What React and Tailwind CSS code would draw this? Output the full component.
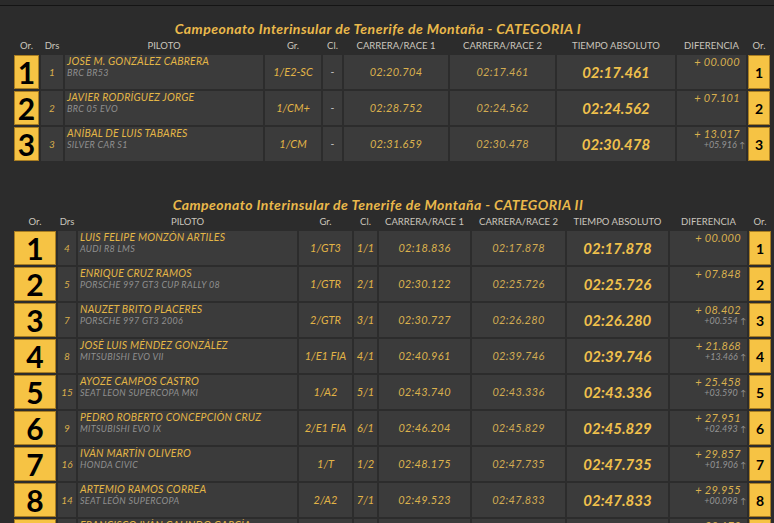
import React from 'react';

const C1 = ['w-[25px]', 'w-[22px]', 'w-[198px]', 'w-[56px]', 'w-[19px]', 'w-[104px]', 'w-[105px]', 'w-[118px]', 'w-[69px]', 'w-[22px]'];
const C2 = ['w-[42px]', 'w-[18px]', 'w-[219px]', 'w-[53px]', 'w-[23px]', 'w-[91px]', 'w-[93px]', 'w-[101px]', 'w-[77px]', 'w-[22px]'];

const cabeceras = ['Or.', 'Drs', 'PILOTO', 'Gr.', 'Cl.', 'CARRERA/RACE 1', 'CARRERA/RACE 2', 'TIEMPO ABSOLUTO', 'DIFERENCIA', 'Or.'];

const cat1 = [
  { pos: 1, drs: '1', piloto: 'JOSÉ M. GONZÁLEZ CABRERA', coche: 'BRC BR53', gr: '1/E2-SC', cl: '-', r1: '02:20.704', r2: '02:17.461', t: '02:17.461', dif: '+ 00.000' },
  { pos: 2, drs: '2', piloto: 'JAVIER RODRÍGUEZ JORGE', coche: 'BRC 05 EVO', gr: '1/CM+', cl: '-', r1: '02:28.752', r2: '02:24.562', t: '02:24.562', dif: '+ 07.101' },
  { pos: 3, drs: '3', piloto: 'ANÍBAL DE LUIS TABARES', coche: 'SILVER CAR S1', gr: '1/CM', cl: '-', r1: '02:31.659', r2: '02:30.478', t: '02:30.478', dif: '+ 13.017', sub: '+05.916' },
];

const cat2 = [
  { pos: 1, drs: '4', piloto: 'LUIS FELIPE MONZÓN ARTILES', coche: 'AUDI R8 LMS', gr: '1/GT3', cl: '1/1', r1: '02:18.836', r2: '02:17.878', t: '02:17.878', dif: '+ 00.000' },
  { pos: 2, drs: '5', piloto: 'ENRIQUE CRUZ RAMOS', coche: 'PORSCHE 997 GT3 CUP RALLY 08', gr: '1/GTR', cl: '2/1', r1: '02:30.122', r2: '02:25.726', t: '02:25.726', dif: '+ 07.848' },
  { pos: 3, drs: '7', piloto: 'NAUZET BRITO PLACERES', coche: 'PORSCHE 997 GT3 2006', gr: '2/GTR', cl: '3/1', r1: '02:30.727', r2: '02:26.280', t: '02:26.280', dif: '+ 08.402', sub: '+00.554' },
  { pos: 4, drs: '8', piloto: 'JOSÉ LUIS MÉNDEZ GONZÁLEZ', coche: 'MITSUBISHI EVO VII', gr: '1/E1 FIA', cl: '4/1', r1: '02:40.961', r2: '02:39.746', t: '02:39.746', dif: '+ 21.868', sub: '+13.466' },
  { pos: 5, drs: '15', piloto: 'AYOZE CAMPOS CASTRO', coche: 'SEAT LEON SUPERCOPA MKI', gr: '1/A2', cl: '5/1', r1: '02:43.740', r2: '02:43.336', t: '02:43.336', dif: '+ 25.458', sub: '+03.590' },
  { pos: 6, drs: '9', piloto: 'PEDRO ROBERTO CONCEPCIÓN CRUZ', coche: 'MITSUBISHI EVO IX', gr: '2/E1 FIA', cl: '6/1', r1: '02:46.204', r2: '02:45.829', t: '02:45.829', dif: '+ 27.951', sub: '+02.493' },
  { pos: 7, drs: '16', piloto: 'IVÁN MARTÍN OLIVERO', coche: 'HONDA CIVIC', gr: '1/T', cl: '1/2', r1: '02:48.175', r2: '02:47.735', t: '02:47.735', dif: '+ 29.857', sub: '+01.906' },
  { pos: 8, drs: '14', piloto: 'ARTEMIO RAMOS CORREA', coche: 'SEAT LEÓN SUPERCOPA', gr: '2/A2', cl: '7/1', r1: '02:49.523', r2: '02:47.833', t: '02:47.833', dif: '+ 29.955', sub: '+00.098' },
  { pos: 9, drs: '12', piloto: 'FRANCISCO IVÁN GALINDO GARCÍA', coche: 'MITSUBISHI EVO X', gr: '1/N', cl: '1/3', r1: '02:50.012', r2: '02:48.050', t: '02:48.050', dif: '+ 30.172', sub: '+00.217' },
];

function Fila({ f, c }) {
  return (
    <div className="flex gap-[2px] h-[34px]">
      <div className={`${c[0]} shrink-0 bg-[#f6c344] border border-[#a87d22] flex items-center justify-center text-black font-bold text-[30px] leading-[32px]`}>
        {f.pos}
      </div>
      <div className={`${c[1]} shrink-0 bg-[#3b3b3b] flex items-center justify-center italic text-[10px] text-[#d9ae4c]`}>{f.drs}</div>
      <div className={`${c[2]} shrink-0 bg-[#3b3b3b] pl-[2px] italic leading-[11px] overflow-hidden whitespace-nowrap`}>
        <div className="text-[10.5px] text-[#e4b646] pt-[1px] tracking-[0.2px]">{f.piloto}</div>
        <div className="text-[9px] text-[#8f8f8f] tracking-[0.3px]">{f.coche}</div>
      </div>
      <div className={`${c[3]} shrink-0 bg-[#3b3b3b] flex items-center justify-center italic text-[11px] text-[#e2b446] whitespace-nowrap`}>{f.gr}</div>
      <div className={`${c[4]} shrink-0 bg-[#3b3b3b] flex items-center justify-center italic text-[11px] ${f.cl === '-' ? 'text-[#b9b9b9]' : 'text-[#e2b446]'}`}>{f.cl}</div>
      <div className={`${c[5]} shrink-0 bg-[#3b3b3b] flex items-center justify-center italic text-[11px] text-[#dcb24d] tracking-[0.3px]`}>{f.r1}</div>
      <div className={`${c[6]} shrink-0 bg-[#3b3b3b] flex items-center justify-center italic text-[11px] text-[#d2ab52] tracking-[0.3px]`}>{f.r2}</div>
      <div className={`${c[7]} shrink-0 bg-[#3b3b3b] flex items-center justify-center italic font-bold text-[15px] text-[#f0c04c] tracking-[0px]`}>{f.t}</div>
      <div className={`${c[8]} shrink-0 bg-[#3b3b3b] flex flex-col items-end italic leading-[11px]`}>
        <div className="text-[11px] text-[#d9b04e] pr-[6px] pt-[1px] tracking-[0.3px]">{f.dif}</div>
        {f.sub && (
          <div className="text-[9px] text-[#949494] pr-[1px] not-italic">
            <span className="italic">{f.sub}</span> <span className="text-[8px]">↑</span>
          </div>
        )}
      </div>
      <div className={`${c[9]} shrink-0 bg-[#f6c344] border border-[#a87d22] flex items-center justify-center text-black font-bold text-[14px] leading-none pt-[2px]`}>
        {f.pos}
      </div>
    </div>
  );
}

function Categoria({ titulo, filas, c, className }) {
  return (
    <div className={className}>
      <div className="h-[16px] leading-[16px] text-center pr-[29px] italic font-bold text-[14px] text-[#eab94b] tracking-[0.45px] whitespace-nowrap">
        {titulo}
      </div>
      <div className="flex gap-[2px] mt-[3px] h-[12px] leading-[12px] text-[9.5px] text-[#cbc6bd]">
        {cabeceras.map((h, i) => (
          <div key={i} className={`${c[i]} shrink-0 text-center whitespace-nowrap`}>{h}</div>
        ))}
      </div>
      <div className="flex flex-col gap-[2px] mt-[3px]">
        {filas.map((f) => (
          <Fila key={f.pos} f={f} c={c} />
        ))}
      </div>
    </div>
  );
}

export default function App() {
  return (
    <div className="min-h-screen bg-[#2c2c2c] overflow-hidden" style={{ fontFamily: 'Lato, "Open Sans", sans-serif' }}>
      <div className="h-[6px] bg-[#2a2a2a] border-b border-[#141414]" />
      <div className="ml-[14px] w-[757px]">
        <Categoria
          className="mt-[15px]"
          titulo="Campeonato Interinsular de Tenerife de Montaña - CATEGORIA I"
          filas={cat1}
          c={C1}
        />
        <Categoria
          className="mt-[36px]"
          titulo="Campeonato Interinsular de Tenerife de Montaña - CATEGORIA II"
          filas={cat2}
          c={C2}
        />
      </div>
    </div>
  );
}
